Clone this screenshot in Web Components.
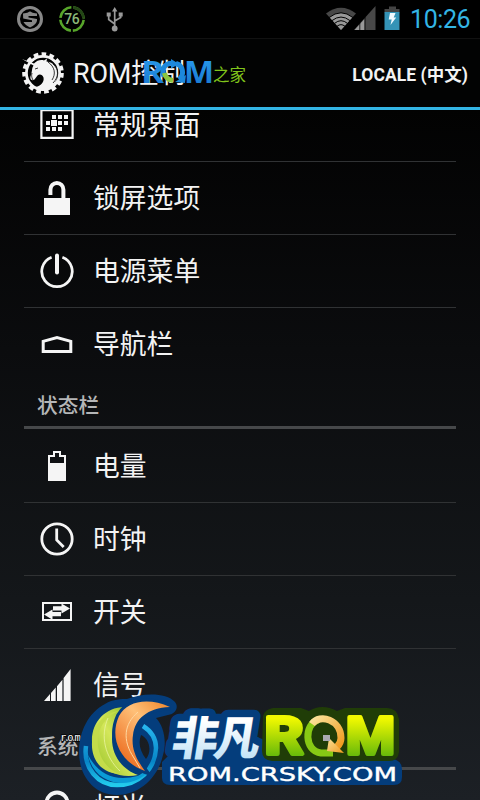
<!DOCTYPE html>
<html lang="zh-CN">
<head>
<meta charset="utf-8">
<title>ROM控制</title>
<style>
html, body { margin: 0; height: 100%; background: #000; }
body { overflow: hidden; }
</style>
</head>
<body>
<rom-app>
  <status-bar slot="status" time="10:26" score="76"></status-bar>
  <action-bar slot="bar" heading="ROM控制">LOCALE (中文)</action-bar>
  <pref-row icon="grid">常规界面</pref-row>
  <pref-row icon="lock">锁屏选项</pref-row>
  <pref-row icon="power">电源菜单</pref-row>
  <pref-row icon="home" last>导航栏</pref-row>
  <pref-header>状态栏</pref-header>
  <pref-row icon="battery">电量</pref-row>
  <pref-row icon="clock">时钟</pref-row>
  <pref-row icon="toggle">开关</pref-row>
  <pref-row icon="signal" last>信号</pref-row>
  <pref-header>系统</pref-header>
  <pref-row icon="bulb">灯光</pref-row>
  <site-mark slot="marks"></site-mark>
</rom-app>

<script>
function attach(el, html) {
  el.attachShadow({ mode: 'open' }).innerHTML = html
}

const icons = {
  grid: `<path fill="none" stroke="#f5f5f5" stroke-width="2.2" d="M2.4 3.2h31.2v27.6H2.4z"/>
    <path d="M13 8h4v4h-4zM19 8h4v4h-4zM25 8h4v4h-4zM7 14h4v4H7zM12 13h6v6h-6zM19 14h4v4h-4zM25 14h4v4h-4zM7 20h4v4H7zM13 20h4v4h-4zM19 20h4v4h-4z"/>`,
  lock: `<path d="M5 18h26v17H5z"/><path fill="none" stroke="#f5f5f5" stroke-width="4" d="M11.400 15V9.700a6.500 6.700 0 0 1 13 0V18"/>`,
  power: `<path fill="none" stroke="#f5f5f5" stroke-width="2.8" d="M12.6 4.2a15.2 15.2 0 1 0 10.8 0"/>
    <path fill="none" stroke="#f5f5f5" stroke-width="4" stroke-linecap="round" d="M18 2.500v17"/>`,
  home: `<path fill="none" stroke="#f5f5f5" stroke-width="3" d="M4.2 25.5V15.4L18 11.6l13.8 3.8v10.1z"/>`,
  battery: `<path fill-rule="evenodd" d="M9 7h5V3h8v4h5v26H9zM11 9v6h14V9h-5V5h-4v4z"/>`,
  clock: `<circle cx="18" cy="18" r="15.2" fill="none" stroke="#f5f5f5" stroke-width="2.8"/>
    <path fill="none" stroke="#f5f5f5" stroke-width="2.8" d="M17.700 7.500v11.500l7 7"/>`,
  toggle: `<path fill="none" stroke="#f5f5f5" stroke-width="2" d="M4 9h28v17H4z"/>
    <path d="M14 12.300h8.500V9.500l8.500 5-8.500 5v-3H14zM22 18v4.200h-8.500v3.500L5 20.500l8.500-5V18z"/>`,
  signal: `<path d="M5 34l6-7v7zM12 34v-8l4.700-5.400V34zM18 34V19.300l5.400-6.500V34zM24.600 34V11l7-9v32z"/>`,
  bulb: `<circle cx="18" cy="14" r="10.500" fill="none" stroke="#f5f5f5" stroke-width="3.800"/>`
}

class RomApp extends HTMLElement {
  constructor() {
    super()
    attach(this, `
<style>
:host {
  display: flex; flex-direction: column; position: relative;
  width: 480px; height: 800px; overflow: hidden;
  background: linear-gradient(#000 0, #020202 110px, #0b0c0e 350px, #14171a 600px, #1c2025 800px);
  color: #f3f3f3;
  font-family: Roboto, "Noto Sans CJK SC", sans-serif;
}
main { flex: 1; min-height: 0; overflow: hidden; padding: 0 24px; }
.list { display: flex; flex-direction: column; margin-top: -21px; }
</style>
<slot name="status"></slot>
<slot name="bar"></slot>
<main><div class="list"><slot></slot></div></main>
<slot name="marks"></slot>`)
  }
}

class StatusBar extends HTMLElement {
  constructor() {
    super()
    attach(this, `
<style>
:host { display: flex; align-items: center; justify-content: space-between; box-sizing: border-box; height: 38px; flex: none; padding: 0 9px 0 16px; background: #000; }
div { display: flex; align-items: center; }
svg { display: block; }
.time { font-size: 25px; line-height: 38px; color: #33b5e5; margin-left: 9px; padding-top: 2px; letter-spacing: -.4px; width: 61px; white-space: nowrap; }
</style>
<div>
  <svg width="120" height="38">
    <circle cx="14" cy="19" r="11.5" fill="none" stroke="#888" stroke-width="3"/>
    <path fill="#888" d="M7 13.5c5-.2 6-2 7-2s2 1.800 7 2v2.500H12.500v1.500L21 19c.5 4-3 6.500-7 8.500-3-1.500-5.500-3.200-6.500-5.500H16v-1.700l-8.800-1.800z"/>
    <circle cx="56" cy="19" r="11.700" fill="none" stroke="#57a52a" stroke-width="2.600" stroke-dasharray="16.380 2" stroke-dashoffset="-1"/>
    <path fill="none" stroke="#234516" stroke-width="2.800" d="M57.200 7.300A11.700 11.700 0 0 1 67.600 17.800"/>
    <text x="48.300" y="24" font-size="14" font-weight="500" fill="#8bb878" textLength="15.500" class="score"></text>
    <path stroke="#999" stroke-width="1.700" fill="none" d="M98.700 28V10M98.700 24l-6-4.500v-4M98.700 21l6-3.500v-3"/>
    <path fill="#999" d="M98.700 7l2.700 4.500H96zM90.700 12.500h4v4h-4zM102.700 12.500h4v4h-4z"/><circle cx="98.700" cy="28.500" r="2.900" fill="#999"/>
  </svg>
</div>
<div>
  <svg width="76" height="38" viewBox="324 0 76 38">
    <path fill="#474747" d="M325 13.500Q340 2 355 13.500L340 30z"/>
    <path fill="#999" d="M328.500 17.300Q340 8.500 351.500 17.300L340 30z"/>
    <path fill="none" stroke="#000" stroke-width="1" d="M328 17.600Q340 8 352 17.600M331 20.600Q340 13.500 349 20.600M333.500 23.400Q340 18 346.500 23.400M336 26.300Q340 23 344 26.300"/>
    <path fill="#484848" d="M374.500 6v24H353z"/>
    <path fill="#999" d="M353.500 30l10-11v11z"/>
    <path stroke="#000" stroke-width=".8" d="M358.800 23v7M364 17v13"/>
    <path fill="#444" d="M388 6.500h7V9h3.500v3.500h-15V9h4.500z"/>
    <path fill="#3493b6" d="M383.500 12h15v18h-15z"/>
    <path fill="#f2fbff" d="M389 13h5.500l-1.800 4.500h2.500L389.500 25l1.200-5.500h-3z"/>
  </svg>
  <span class="time"></span>
</div>`)
  }
  connectedCallback() {
    this.shadowRoot.querySelector('.score').textContent = this.getAttribute('score')
    this.shadowRoot.querySelector('.time').textContent = this.getAttribute('time')
  }
}

class ActionBar extends HTMLElement {
  constructor() {
    super()
    // gear teeth come from a dashed ring around the rim
    attach(this, `
<style>
:host { display: flex; align-items: center; box-sizing: border-box; height: 72px; flex: none; padding: 0 12px 0 21px; border-top: 1px solid #111; border-bottom: 3px solid #33b5e5; background: #020303; }
svg { display: block; flex: none; }
h1 { margin: 0 0 0 8px; padding-top: 2px; flex: 1; font-size: 27px; font-weight: 400; line-height: 66px; letter-spacing: -.2px; white-space: nowrap; }
.action { font-size: 17.500px; font-weight: 700; white-space: nowrap; letter-spacing: .05px; }
</style>
<svg width="44" height="44" viewBox="0 0 44 44">
  <circle cx="22" cy="22" r="18.800" fill="none" stroke="#f4f4f4" stroke-width="4" stroke-dasharray="4.600 3.274"/>
  <circle cx="22" cy="22" r="16.600" fill="none" stroke="#f4f4f4" stroke-width="2.800"/>
  <path fill="#f4f4f4" d="M1 8l12 4.500c3-3.300 7-4 10-3l3-2-.5 3c7 1 11 5 11 12 0 9-6 16-14 17-5 0-8-1-10-3 7-1 11-5 10-10-1-3-4-4-6-2l-3 4c-2 2-5 0-4-3 2-5 1-8 3-11z"/>
  <path fill="none" stroke="#050505" stroke-width=".8" d="M27 11c7 5 8 12 4 18M32 13c6 5 6 13 0 19M14 31c-3-2-4-6-3-9M19 27c1 3-1 6-4 8M14 18l3-1"/>
</svg>
<h1></h1>
<span class="action"><slot></slot></span>`)
  }
  connectedCallback() {
    this.shadowRoot.querySelector('h1').textContent = this.getAttribute('heading')
  }
}

class PrefRow extends HTMLElement {
  constructor() {
    super()
    attach(this, `
<style>
:host { display: flex; align-items: center; gap: 18px; box-sizing: border-box; height: 73px; flex: none; padding-left: 15px; border-bottom: 1px solid #303234; font-size: 26.800px; line-height: 36px; }
:host([last]) { border-bottom-color: transparent; }
svg { display: block; flex: none; fill: #f5f5f5; }
span { padding-top: 1px; }
</style>
<svg width="36" height="36"></svg>
<span><slot></slot></span>`)
  }
  connectedCallback() {
    this.shadowRoot.querySelector('svg').innerHTML = icons[this.getAttribute('icon')]
  }
}

class PrefHeader extends HTMLElement {
  constructor() {
    super()
    attach(this, `
<style>
:host { display: flex; align-items: center; box-sizing: border-box; height: 48px; margin-bottom: 1px; flex: none; padding-left: 13px; border-bottom: 3px solid #46484a; font-size: 20.700px; font-weight: 500; color: #b5b6b7; }
</style>
<slot></slot>`)
  }
}

class SiteMark extends HTMLElement {
  constructor() {
    super()
    attach(this, `
<style>
:host { display: block; position: absolute; left: 0; top: 0; }
svg { display: block; }
.cjk { font-family: "Noto Sans CJK SC", sans-serif; }
.wide { font-family: "DejaVu Sans", sans-serif; }
</style>
<svg width="480" height="800">
  <defs>
    <linearGradient id="blue" x2="0" y2="1"><stop stop-color="#2ca1f3"/><stop offset="1" stop-color="#1673cb"/></linearGradient>
    <linearGradient id="lime" x2="0" y2="1"><stop offset=".2" stop-color="#f0f800"/><stop offset=".85" stop-color="#63b80a"/></linearGradient>
    <linearGradient id="ice" x2="0" y2="1"><stop offset=".3" stop-color="#fff"/><stop offset="1" stop-color="#b3dcf5"/></linearGradient>
    <linearGradient id="leaf" x1="1" x2="0" y2="1"><stop stop-color="#84b51e"/><stop offset=".5" stop-color="#d4e75a"/><stop offset="1" stop-color="#8fbd22"/></linearGradient>
    <linearGradient id="fire" x1="1" x2=".2" y2="1"><stop stop-color="#ef8428"/><stop offset=".4" stop-color="#ffc078"/><stop offset="1" stop-color="#ea6417"/></linearGradient>
    <linearGradient id="gold" x2="1" y2="1"><stop stop-color="#fbe39b"/><stop offset="1" stop-color="#f19a1e"/></linearGradient>
    <linearGradient id="sea" x2="0" y2="1"><stop stop-color="#27b6ee"/><stop offset=".6" stop-color="#0785c8"/><stop offset="1" stop-color="#22cbed"/></linearGradient>
  </defs>

  <g font-family="Open Sans" font-weight="700" font-size="31" fill="url(#blue)">
    <text x="141" y="83" textLength="23" lengthAdjust="spacingAndGlyphs">R</text>
    <text x="184" y="83" textLength="30" lengthAdjust="spacingAndGlyphs">M</text>
  </g>
  <path fill="none" stroke="#1d88dc" stroke-width="5" d="M172 63.300c-8 0-11 7-8 13M176 63.500c7 2 9 11 3 16"/>
  <path fill="none" stroke="#8cc63f" stroke-width="5" d="M164.500 73c1 5 4 7 8.500 7.500"/>
  <path fill="#1d88dc" d="M171 59l8 5-8 4.500zM186 75l-1 8-10-1z"/>
  <text class="cjk" x="213" y="81" font-size="16.500" fill="#80c51b">之家</text>

  <text x="60" y="741" font-family="DejaVu Sans Mono" font-size="10.500" fill="#fff" stroke="#000" stroke-width="1.500" paint-order="stroke" textLength="28">romz</text>

  <path fill="#043d7c" fill-rule="evenodd" d="M79 752c0-20 9-39 26-48 8-5 17-5 22-5 15-6 39-7 48 3 4 5 1 12-7 13l-12 3c8 8 11 24 7 37-5 23-24 40-46 40-24 0-38-20-38-43zM141 735c-3 8-1 16 5 24 6-7 4-20-5-24z"/>
  <g stroke="#043d7c" stroke-linejoin="round" fill="#043d7c">
    <text class="cjk" x="0" y="0" transform="translate(170 755) skewX(-9)" font-size="46" font-weight="900" textLength="88" stroke-width="15" aria-hidden="true">非凡</text>
    <path d="M172 752h92l2 7h127q9 2 9 10v8q0 8-8 8H170q-8 0-8-7v-16z" stroke="none"/>
  </g>
  <path fill="#203d07" d="M263 716q2-7 10-8h28l8 3q13-8 28 0l8-3h42q10 0 12 11v33q-1 9-10 9H272q-10-1-10-10z"/>

  <path fill="none" stroke="url(#sea)" stroke-width="4.500" d="M86 746c-3 22 12 39 31 39 21 0 38-15 39-37 0-10-5-17-13-22"/>
  <path fill="#0a9bd6" d="M88 755c4 19 19 28 34 28 12 0 22-6 28-13-8 5-17 8-27 8-15 0-27-8-35-23z"/>
  <path fill="url(#leaf)" d="M125 707c-21 0-34 17-33 35 1 22 20 38 46 33-15-5-26-19-26-36 0-14 4-24 13-32z"/>
  <path fill="#c4dc4a" d="M119 711c-14 5-23 19-21 35 2 14 10 23 21 28-19-1-28-16-27-32 1-16 11-29 27-31z"/>
  <path fill="none" stroke="#eaf4a0" stroke-width=".8" d="M108 718c-8 18-3 39 12 53"/>
  <path fill="url(#fire)" stroke="#043d7c" stroke-width="6" paint-order="stroke" d="M170 707c-22-10-43-6-51 9-11 24 4 48 26 55-9-12-14-23-12-36 2-16 14-27 37-28z"/>
  <path fill="none" stroke="#ffd7a0" stroke-width="1" d="M138 712c-14 12-16 28-4 46l6 10"/>

  <text class="cjk" x="0" y="0" transform="translate(170 755) skewX(-9)" font-size="46" font-weight="900" textLength="88" fill="url(#ice)">非凡</text>
  <g font-family="Roboto" font-size="51" font-weight="700" fill="url(#lime)" stroke="url(#lime)" stroke-width="4" stroke-linejoin="round">
    <text x="264.500" y="754" textLength="39" lengthAdjust="spacingAndGlyphs">R</text>
    <text x="346" y="754" textLength="49" lengthAdjust="spacingAndGlyphs">M</text>
  </g>
  <path fill="none" stroke="#87c914" stroke-width="7" d="M318 720c-14 4-14 31 3 33h12"/>
  <path fill="none" stroke="url(#gold)" stroke-width="7" d="M312 724c8-11 29-4 29 14 0 4-2 7-4 9"/>
  <path fill="url(#gold)" d="M329 738l15 15-17-2z"/>
  <path fill="#aaa9b2" d="M323 735h7v6h-7z"/>
  <text class="wide" x="168" y="780.500" font-size="20" fill="#fff" stroke="#fff" stroke-width=".4" textLength="229" lengthAdjust="spacingAndGlyphs">ROM.CRSKY.COM</text>
</svg>`)
  }
}

customElements.define('rom-app', RomApp)
customElements.define('status-bar', StatusBar)
customElements.define('action-bar', ActionBar)
customElements.define('pref-row', PrefRow)
customElements.define('pref-header', PrefHeader)
customElements.define('site-mark', SiteMark)
</script>
</body>
</html>
